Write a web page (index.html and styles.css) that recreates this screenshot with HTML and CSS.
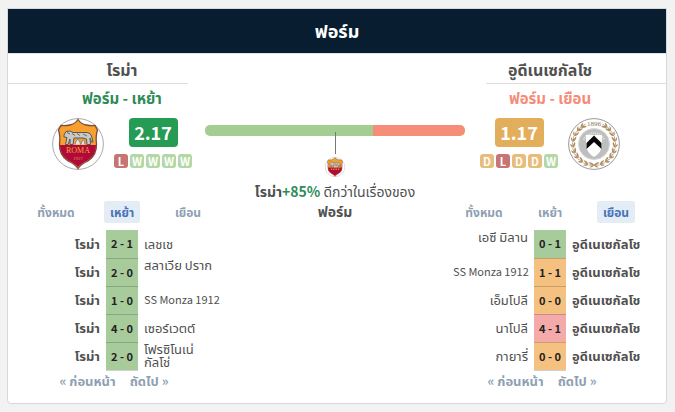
FILE: index.html
```html
<!DOCTYPE html>
<html lang="th">
<head>
<meta charset="utf-8">
<meta name="viewport" content="width=device-width, initial-scale=1">
<title>ฟอร์ม</title>
<link rel="stylesheet" href="styles.css">
</head>
<body>
<main class="card">
  <h1 class="title">ฟอร์ม</h1>
  <div class="compare">
    <section class="team home">
      <h2 class="name">โรม่า</h2>
      <hr class="rule">
      <h3 class="kind green">ฟอร์ม - เหย้า</h3>
      <div class="summary">
        <svg class="crest" viewBox="0 0 52 52" role="img" aria-label="โรม่า">
          <g id="roma">
            <circle cx="26" cy="26" r="25.4" fill="#fff" stroke="#aaa" stroke-width="1"/>
            <path d="M26 1.5 Q29 6 34 7 Q39 8 43 7.500 L45.500 12 Q43.500 18 44.500 26 Q45 37 36 43 Q29 46 26 50.500 Q23 46 16 43 Q7 37 7.500 26 Q8.500 18 6.500 12 L9 7.500 Q13 8 18 7 Q23 6 26 1.500Z" fill="#f7a02e" stroke="#7d4a3a" stroke-width="1.300"/>
            <path d="M8 27 H44 Q44 37 35.500 42.500 Q29 45.500 26 49 Q23 45.500 16.500 42.500 Q8 37 8 27Z" fill="#b00a3a"/>
            <path d="M12 17 L14 13.500 L18 13 L21 14.500 L35 14.500 Q39 15 39.500 18 L41 24 L39.500 24 L38 20 L38.500 26.500 L35 26.500 L34.500 21 L31 20 L22 20 L21 26.500 L18 26.500 L18 21 L16 26.500 L13.500 26.500 L15 19.500 L12 19Z" fill="#c9c9c7" stroke="#5d5550" stroke-width="1"/>
            <path d="M20 15.500 L23 17.500 M25 15.500 L28 17.500 M31 16 L35 18 M15 14.500 L18 16" stroke="#6b6b6b" stroke-width="1"/>
            <path d="M23 26.500 L24 23 L26 21 L28 24 L28.500 26.500 M29 26.500 L30 23 L32 21.500 L33 26.500" fill="#e3e3dd" stroke="#8a8a86" stroke-width="1"/>
          </g>
          <text x="26" y="35" class="crest-name" text-anchor="middle">ROMA</text>
          <text x="26" y="42" class="crest-year" text-anchor="middle">1927</text>
        </svg>
        <div class="rating">
          <strong class="score high">2.17</strong>
          <div class="results"><span class="r l">L</span><span class="r w">W</span><span class="r w">W</span><span class="r w">W</span><span class="r w">W</span></div>
        </div>
      </div>
      <div class="tabs">
        <button type="button" class="tab">ทั้งหมด</button>
        <button type="button" class="tab active">เหย้า</button>
        <button type="button" class="tab">เยือน</button>
      </div>
      <table class="matches">
        <tr><th class="left">โรม่า</th><td class="goals win">2 - 1</td><td class="right">เลชเช</td></tr>
        <tr><th class="left">โรม่า</th><td class="goals win">2 - 0</td><td class="right top">สลาเวีย ปราก</td></tr>
        <tr><th class="left">โรม่า</th><td class="goals win">1 - 0</td><td class="right latin">SS Monza 1912</td></tr>
        <tr><th class="left">โรม่า</th><td class="goals win">4 - 0</td><td class="right">เซอร์เวตต์</td></tr>
        <tr><th class="left">โรม่า</th><td class="goals win">2 - 0</td><td class="right">โฟรซิโนเน่<br>กัลโช่</td></tr>
      </table>
      <nav class="pager"><a href="#prev">« ก่อนหน้า</a><a href="#next">ถัดไป »</a></nav>
    </section>

    <section class="middle">
      <div class="bar"><span class="bar-home"></span><span class="bar-away"></span></div>
      <div class="pointer"></div>
      <svg class="mini" viewBox="0 0 52 52" role="img" aria-label="โรม่า">
        <use href="#roma"/>
        <path d="M15 32 H37" stroke="#e07a38" stroke-width="4" stroke-dasharray="4 2"/>
      </svg>
      <p class="verdict"><b>โรม่า<span class="green">+85%</span></b> ดีกว่าในเรื่องของ <b>ฟอร์ม</b></p>
    </section>

    <section class="team away">
      <h2 class="name">อูดีเนเซกัลโช</h2>
      <hr class="rule">
      <h3 class="kind coral">ฟอร์ม - เยือน</h3>
      <div class="summary">
        <div class="rating">
          <strong class="score mid">1.17</strong>
          <div class="results"><span class="r d">D</span><span class="r l">L</span><span class="r d">D</span><span class="r d">D</span><span class="r w">W</span></div>
        </div>
        <svg class="crest" viewBox="0 0 52 52" role="img" aria-label="อูดีเนเซกัลโช">
          <circle cx="26" cy="26" r="25.4" fill="#fff" stroke="#999" stroke-width="1"/>
          <g id="wreath" fill="#b08f62">
            <g id="spray">
              <path id="leaves" d="M26 46.500 Q23 43.500 20.500 44.500 Q23 47.500 26 46.500Z M26 47.500 Q23 47 21.500 49.500 Q24.500 50 26 47.500Z M26 46.500 L20.500 46.800 L20.500 47.400 L26 47.500Z"/>
              <use href="#leaves" transform="rotate(16 26 26)"/>
              <use href="#leaves" transform="rotate(32 26 26)"/>
              <use href="#leaves" transform="rotate(48 26 26)"/>
            </g>
            <use href="#spray" transform="rotate(64 26 26)"/>
            <use href="#leaves" transform="rotate(128 26 26)"/>
            <use href="#leaves" transform="rotate(142 26 26)"/>
          </g>
          <use href="#wreath" transform="matrix(-1 0 0 1 52 0)"/>
          <circle cx="26" cy="26" r="15.500" fill="#bebebe" stroke="#d8d8d8"/>
          <path d="M15.500 22 A11.500 11.500 0 0 1 36.500 22" fill="none" stroke="#dedede" stroke-width="2" stroke-dasharray="1.200 .8"/>
          <path d="M18 17 H34 V28 Q33 35 26 39 Q19 35 18 28Z" fill="#fff"/>
          <path d="M26 17.500 L33.500 25 V31 L26 24 L18.500 31 V25Z" fill="#080808"/>
          <text x="26" y="8" class="crest-top" text-anchor="middle">1896</text>
        </svg>
      </div>
      <div class="tabs">
        <button type="button" class="tab">ทั้งหมด</button>
        <button type="button" class="tab">เหย้า</button>
        <button type="button" class="tab active">เยือน</button>
      </div>
      <table class="matches">
        <tr><td class="left top">เอซี มิลาน</td><td class="goals win">0 - 1</td><th class="right">อูดีเนเซกัลโช</th></tr>
        <tr><td class="left latin">SS Monza 1912</td><td class="goals draw">1 - 1</td><th class="right">อูดีเนเซกัลโช</th></tr>
        <tr><td class="left">เอ็มโปลี</td><td class="goals draw">0 - 0</td><th class="right">อูดีเนเซกัลโช</th></tr>
        <tr><td class="left">นาโปลี</td><td class="goals loss">4 - 1</td><th class="right">อูดีเนเซกัลโช</th></tr>
        <tr><td class="left">กายารี่</td><td class="goals draw">0 - 0</td><th class="right">อูดีเนเซกัลโช</th></tr>
      </table>
      <nav class="pager"><a href="#prev">« ก่อนหน้า</a><a href="#next">ถัดไป »</a></nav>
    </section>
  </div>
</main>
</body>
</html>
```
FILE: styles.css
```css
* { box-sizing: border-box; }

body {
  margin: 0;
  padding: 8px 8px 8px 7px;
  background: #f2f2f2;
  color: #505050;
  font: 14px/20px "Noto Sans CJK JP", "Noto Sans Thai", "Liberation Sans", sans-serif;
}

.card {
  background: #fff;
  border: 1px solid #d8d8d8;
  border-radius: 0 0 4px 4px;
}

.title {
  margin: 0;
  padding-bottom: 2px;
  background: #081d30;
  border-bottom: 1px solid #dfe2e4;
  color: #fff;
  font-size: 18px;
  line-height: 42px;
  text-align: center;
}

.compare {
  display: grid;
  grid-template-columns: 228fr 198fr 232fr;
}

.team { display: flex; flex-direction: column; align-items: center; padding-bottom: 12px; }

.name {
  margin: 5px 0 4px;
  font-size: 16px;
  line-height: 20px;
}

.rule {
  width: 180px;
  margin: 0;
  border: 0;
  border-top: 1px solid #ddd;
}
.home .rule { align-self: flex-start; }
.away .rule { align-self: flex-end; }

.kind { margin: 4px 0 10px; font-size: 15px; line-height: 20px; }
.green { color: #2e8b57; }
.coral { color: #f58c78; }

.summary { display: flex; gap: 10px; }
.crest { width: 52px; height: 52px; }
.rating { display: flex; flex-direction: column; align-items: center; gap: 7px; }

.score {
  width: 49px;
  border-radius: 4px;
  color: #fff;
  font-size: 18px;
  line-height: 29px;
  text-align: center;
}
.high { background: #259b54; }
.mid { background: #e3ae5c; }

.results { display: flex; gap: 2px; }
.r {
  width: 14px;
  border-radius: 3px;
  color: #fff;
  font-size: 11px;
  font-weight: 700;
  line-height: 14px;
  text-align: center;
}
.w { background: #b3d7a5; }
.l { background: #c77474; }
.d { background: #e8bd7c; }

.tabs {
  display: grid;
  grid-template-columns: repeat(3, 66px);
  justify-items: center;
  margin: 31px 0 7px;
}
.tab {
  padding: 0 6px;
  border: 0;
  border-radius: 2px;
  background: none;
  color: #8f9fb3;
  font: 700 12px/22px "Noto Sans CJK JP", "Noto Sans Thai", "Liberation Sans", sans-serif;
}
.tab.active { background: #e4ecf6; color: #4774b8; }

.matches {
  width: 194px;
  border-collapse: collapse;
  table-layout: fixed;
  font-size: 13px;
  line-height: 13px;
}
.matches th, .matches td { height: 28px; padding: 0 0 2px; white-space: nowrap; }
.matches .left { width: 81px; padding-right: 6px; text-align: right; }
.matches .right { width: 81px; padding-left: 6px; text-align: left; }
.matches .top { vertical-align: top; }
.matches .latin { font-size: 11px; }
.matches .goals {
  width: 32px;
  padding: 0;
  border-bottom: 1px solid rgba(0, 0, 0, .18);
  color: #222;
  font-size: 11px;
  font-weight: 700;
  text-align: center;
}
.win { background: #a8cb9c; }
.draw { background: #f5c180; }
.loss { background: #f5aaaa; }

.pager { display: flex; gap: 14px; margin-right: 16px; }
.pager a {
  color: #8f9fb3;
  font-size: 13px;
  font-weight: 700;
  line-height: 20px;
  text-decoration: none;
}

.middle { display: flex; flex-direction: column; align-items: center; padding-top: 71px; }
.bar {
  display: flex;
  align-self: stretch;
  height: 11px;
  margin: 0 -31px;
  border-radius: 5px;
  overflow: hidden;
}
.bar-home { flex: 168; background: #a3cd91; }
.bar-away { flex: 92; background: #f68d78; }
.pointer { width: 1px; height: 22px; margin-top: -4px; background: #777; }
.mini { width: 20px; height: 20px; margin: 3px 0 4px; }
.verdict { margin: 0; text-align: center; }

.crest-name { fill: #f7a02e; font: 8px "Liberation Serif", serif; }
.crest-year { fill: #e98c4a; font: 5px "Liberation Serif", serif; }
.crest-top { fill: #8d7350; font: 7px "Liberation Serif", serif; }
```
